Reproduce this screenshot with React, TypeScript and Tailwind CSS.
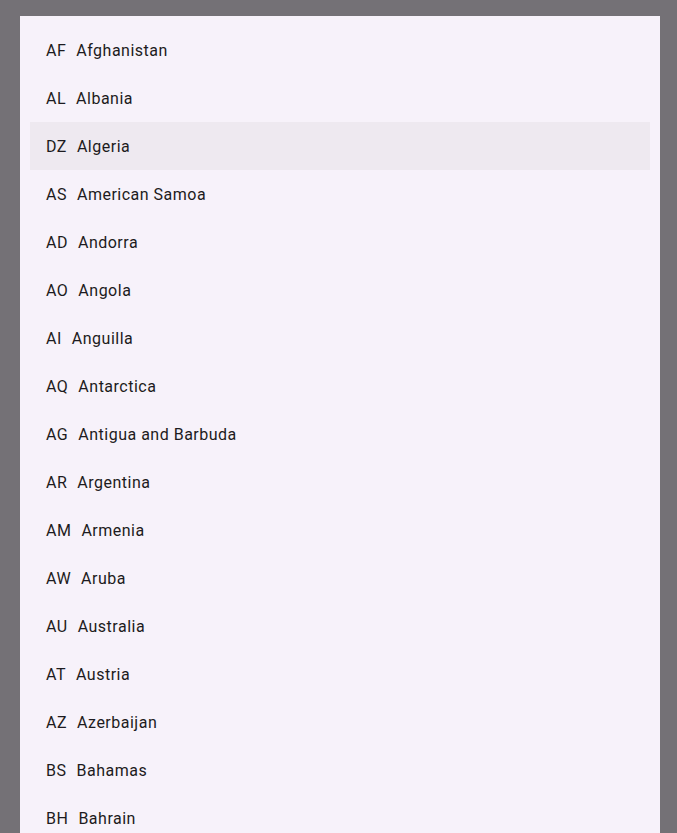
import React from "react";

const countries: [string, string][] = [
  ["AF", "Afghanistan"],
  ["AL", "Albania"],
  ["DZ", "Algeria"],
  ["AS", "American Samoa"],
  ["AD", "Andorra"],
  ["AO", "Angola"],
  ["AI", "Anguilla"],
  ["AQ", "Antarctica"],
  ["AG", "Antigua and Barbuda"],
  ["AR", "Argentina"],
  ["AM", "Armenia"],
  ["AW", "Aruba"],
  ["AU", "Australia"],
  ["AT", "Austria"],
  ["AZ", "Azerbaijan"],
  ["BS", "Bahamas"],
  ["BH", "Bahrain"],
];

export default function App() {
  return (
    <div
      className="flex h-[833px] w-full flex-col overflow-hidden bg-[#747176] pt-[16px] pl-[20px] pr-[17px]"
      style={{ fontFamily: "Roboto, 'Noto Sans', sans-serif" }}
    >
      <div className="flex-1 bg-[#f7f2fa] px-[10px] pt-[10px]">
        {countries.map(([code, name]) => (
          <div
            key={code}
            className={`flex h-12 items-center gap-[10px] px-4 pt-px text-[16px] tracking-[0.5px] text-[#1d1b20] ${
              code === "DZ" ? "bg-[#eee9f0]" : ""
            }`}
          >
            <span>{code}</span>
            <span>{name}</span>
          </div>
        ))}
      </div>
    </div>
  );
}
